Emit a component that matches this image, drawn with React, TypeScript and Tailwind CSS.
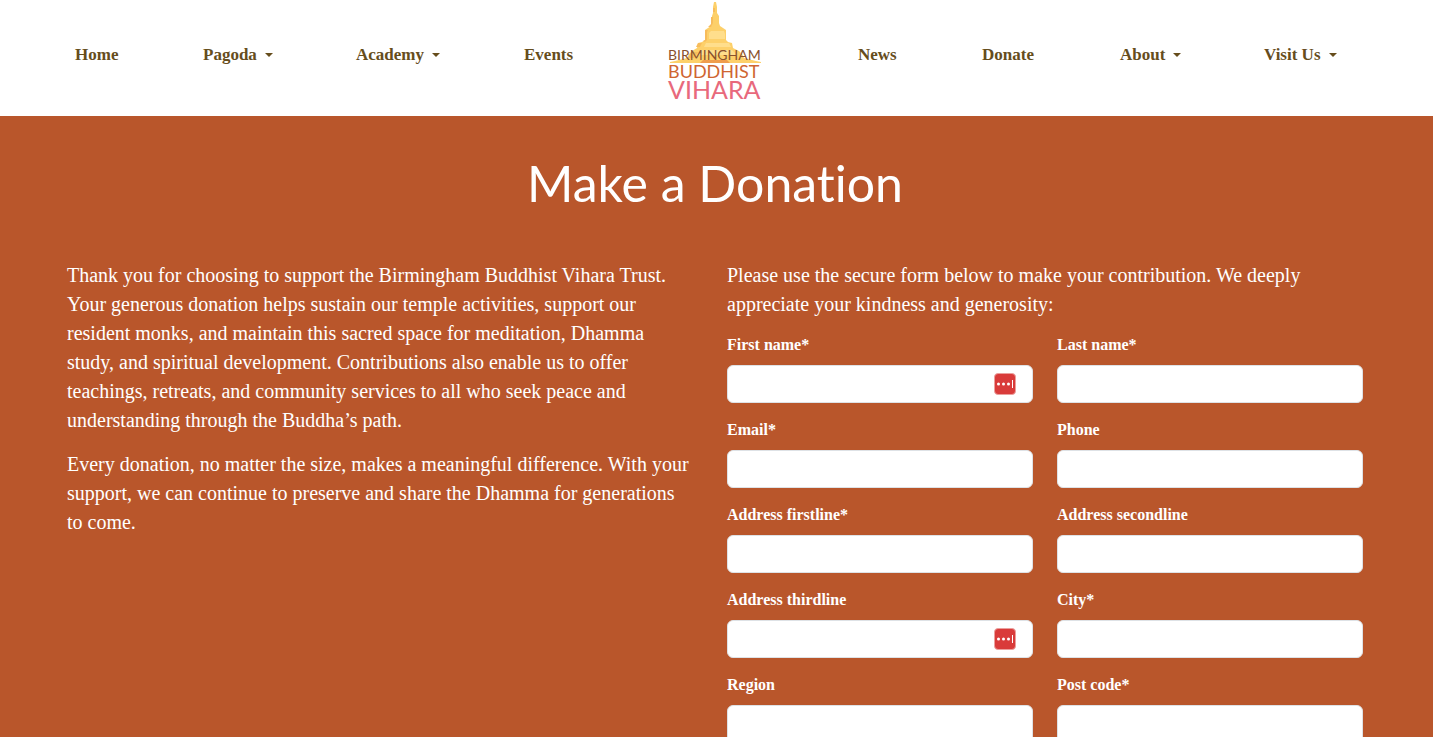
import React from "react";

type NavItem = { label: string; menu?: boolean };

const leftNav: NavItem[] = [
  { label: "Home" },
  { label: "Pagoda", menu: true },
  { label: "Academy", menu: true },
  { label: "Events" },
];

const rightNav: NavItem[] = [
  { label: "News" },
  { label: "Donate" },
  { label: "About", menu: true },
  { label: "Visit Us", menu: true },
];

type Field = { id: string; label: string; type?: string; required?: boolean; badge?: boolean };

const fields: Field[] = [
  { id: "first-name", label: "First name*", required: true, badge: true },
  { id: "last-name", label: "Last name*", required: true },
  { id: "email", label: "Email*", type: "email", required: true },
  { id: "phone", label: "Phone", type: "tel" },
  { id: "address-1", label: "Address firstline*", required: true },
  { id: "address-2", label: "Address secondline" },
  { id: "address-3", label: "Address thirdline", badge: true },
  { id: "city", label: "City*", required: true },
  { id: "region", label: "Region" },
  { id: "post-code", label: "Post code*", required: true },
];

function NavLink({ label, menu }: NavItem) {
  return (
    <a href="#" className="flex items-center gap-2 justify-self-start whitespace-nowrap" aria-haspopup={menu ? "menu" : undefined}>
      {label}
      {menu && (
        <svg width="8" height="4" viewBox="0 0 8 4" fill="currentColor" aria-hidden="true">
          <path d="M0 0h8L4 4z" />
        </svg>
      )}
    </a>
  );
}

function Logo() {
  return (
    <svg width="94" height="108" viewBox="0 0 94 108" className="block overflow-visible font-['Lato',sans-serif] font-normal" role="img" aria-label="Birmingham Buddhist Vihara">
      <path
        fill="#fdd06a"
        d="M45 2h2l1 5v6l2 3v7l1 3 3 2 3 2v10l2 2 4 1 1 5 6 3 3 3 2 4 12 3 5 1v1H1v-1l5-1 12-3 2-4 3-3 5-3 1-5 4-1 3-2v-10l3-2 3-2 1-3v-7l1-3V7z"
      />
      <path
        fill="#f7bc5c"
        d="M44 8h2v4h-2zM42 17h2v6l-2 4h-3l3-3zM36 30h3l-1 2v8l-2 2-2-1 2-1zM29 43h4l-2 4h-4zM23 52h6l-4 6h-6z"
      />
      <path fill="#ffde8c" d="M42 31h13l1 3v5H40v-6zM37 43h23l2 4H35zM32 50h31l5 5H29z" />
      <path fill="#ef9d4e" d="M34 60h24l3 3H31z" />
      <text x="-1" y="60" fontSize="14" fill="#89502d">BIRMINGHAM</text>
      <text x="-1" y="78" fontSize="18" fill="#cf6531">BUDDHIST</text>
      <text x="-1" y="99" fontSize="25" fill="#e8697c">VIHARA</text>
    </svg>
  );
}

function FieldBadge() {
  return (
    <svg width="22" height="22" viewBox="0 0 22 22" className="absolute right-[17px] top-2" aria-hidden="true">
      <rect x="0.5" y="0.5" width="21" height="21" rx="3.5" fill="#d93b3a" stroke="#eba09d" />
      <circle cx="4.5" cy="11" r="1.5" fill="#fff" />
      <circle cx="9.5" cy="11" r="1.5" fill="#fff" />
      <circle cx="14.5" cy="11" r="1.5" fill="#fff" />
      <rect x="18" y="7" width="1" height="8" fill="#fff" />
    </svg>
  );
}

export default function App() {
  return (
    <div className="min-h-screen bg-[#b9562b] font-['Liberation_Serif',serif] text-white">
      <header className="bg-white pr-[3px]">
        <nav className="mx-auto grid h-[116px] max-w-[1320px] grid-cols-[128fr_153fr_168fr_145fr_189fr_124fr_138fr_144fr_99fr] items-start pl-5 pr-3 text-[17px] font-bold leading-6 text-[#664d1c] *:mt-[43px]">
          {leftNav.map((item) => (
            <NavLink key={item.label} {...item} />
          ))}
          <a href="#" className="mt-0! justify-self-start">
            <Logo />
          </a>
          {rightNav.map((item) => (
            <NavLink key={item.label} {...item} />
          ))}
        </nav>
      </header>

      <main className="pr-[3px]">
        <div className="mx-auto max-w-[1320px] px-3 pt-[38px]">
          <h1 className="text-center font-['Lato',sans-serif] text-[50px] leading-[58px] [font-variant-ligatures:none]">
            Make a Donation
          </h1>
          <div className="mt-[49px] grid grid-cols-2 gap-6 text-[20px] leading-[29px]">
            <div className="flex flex-col gap-[15px] pr-3">
              <p>
                Thank you for choosing to support the Birmingham Buddhist Vihara Trust. Your generous donation helps
                sustain our temple activities, support our resident monks, and maintain this sacred space for
                meditation, Dhamma study, and spiritual development. Contributions also enable us to offer teachings,
                retreats, and community services to all who seek peace and understanding through the Buddha’s path.
              </p>
              <p>
                Every donation, no matter the size, makes a meaningful difference. With your support, we can continue
                to preserve and share the Dhamma for generations to come.
              </p>
            </div>
            <div>
              <p>
                Please use the secure form below to make your contribution. We deeply appreciate your kindness and
                generosity:
              </p>
              <form className="mt-[14px] grid grid-cols-2 gap-x-6 gap-y-[15px]">
                {fields.map((field) => (
                  <div key={field.id} className="flex flex-col gap-2">
                    <label htmlFor={field.id} className="text-base font-bold leading-6">
                      {field.label}
                    </label>
                    <div className="relative">
                      <input
                        id={field.id}
                        name={field.id}
                        type={field.type ?? "text"}
                        required={field.required}
                        className="block h-[38px] w-full rounded-md border border-[#dee2e6] bg-white px-3 text-base text-[#212529]"
                      />
                      {field.badge && <FieldBadge />}
                    </div>
                  </div>
                ))}
              </form>
            </div>
          </div>
        </div>
      </main>
    </div>
  );
}
